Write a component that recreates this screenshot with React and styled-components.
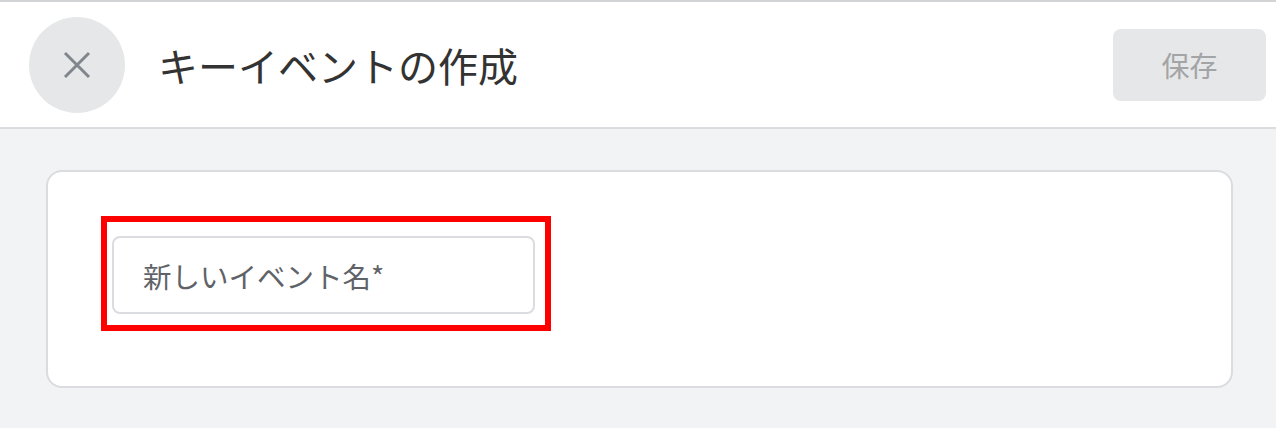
import React from 'react';
import styled, { createGlobalStyle } from 'styled-components';

const GlobalStyle = createGlobalStyle`
  html, body {
    margin: 0;
    padding: 0;
    background: #f1f3f4;
    font-family: "Noto Sans CJK JP", "Noto Sans", sans-serif;
  }
`;

const Page = styled.div`
  width: 1276px;
  height: 428px;
  background: #f1f3f4;
  overflow: hidden;
`;

const Header = styled.header`
  display: flex;
  align-items: center;
  height: 125px;
  padding: 0 10px 0 29px;
  background: #fff;
  border-top: 2px solid #d3d4d6;
  border-bottom: 2px solid #dadce0;
`;

const CloseButton = styled.button`
  width: 96px;
  height: 96px;
  border-radius: 50%;
  border: none;
  background: #e5e7e8;
  display: flex;
  align-items: center;
  justify-content: center;
  padding: 0;
  flex-shrink: 0;
`;

const Title = styled.h1`
  margin: 0 0 0 33px;
  font-size: 40px;
  font-weight: 400;
  color: #333;
  flex: 1;
  line-height: 1;
`;

const SaveButton = styled.button`
  width: 153px;
  height: 72px;
  border: none;
  border-radius: 8px;
  background: #e6e7e8;
  color: #a2a4a6;
  font-family: inherit;
  font-size: 28px;
`;

const Body = styled.main`
  padding: 41px 43px 0 46px;
`;

const Card = styled.section`
  height: 218px;
  box-sizing: border-box;
  background: #fff;
  border: 2px solid #dadce0;
  border-radius: 16px;
  padding: 44px 0 0 53px;
`;

const Highlight = styled.div`
  display: inline-flex;
  border: 6px solid #ff0000;
  padding: 14px 10px 11px 5px;
`;

const NameInput = styled.input`
  width: 423px;
  height: 78px;
  box-sizing: border-box;
  border: 2px solid #dadce0;
  border-radius: 8px;
  padding: 0 0 0 29px;
  font-family: inherit;
  font-size: 28.5px;
  color: #333;
  outline: none;
  &::placeholder {
    color: #5f6368;
  }
`;

function CloseIcon() {
  return (
    <svg width="28" height="28" viewBox="0 0 28 28">
      <path d="M2 2 L26 26 M26 2 L2 26" stroke="#80868b" strokeWidth="3" fill="none" />
    </svg>
  );
}

export default function App() {
  return (
    <Page>
      <GlobalStyle />
      <Header>
        <CloseButton aria-label="閉じる">
          <CloseIcon />
        </CloseButton>
        <Title>キーイベントの作成</Title>
        <SaveButton disabled>保存</SaveButton>
      </Header>
      <Body>
        <Card>
          <Highlight>
            <NameInput placeholder="新しいイベント名*" />
          </Highlight>
        </Card>
      </Body>
    </Page>
  );
}
